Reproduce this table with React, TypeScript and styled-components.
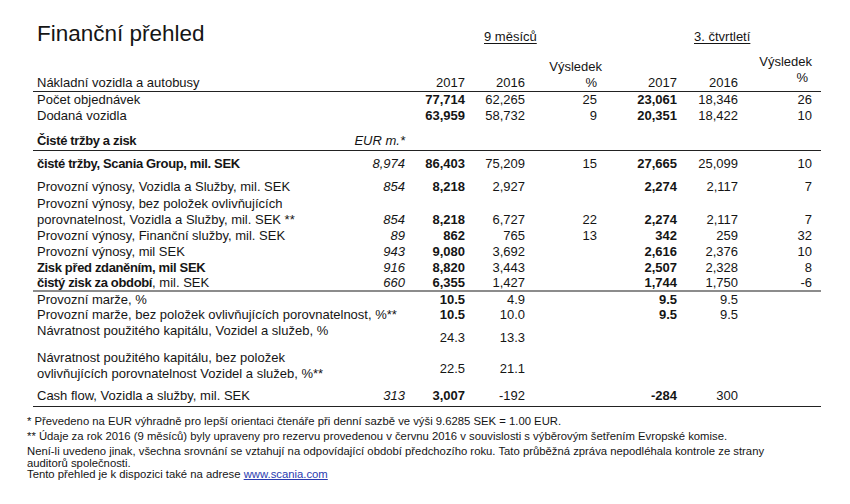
import React from 'react';
import styled, { createGlobalStyle } from 'styled-components';

const GlobalStyle = createGlobalStyle`
  html, body {
    margin: 0;
    padding: 0;
    background: #fff;
  }
  body {
    font-family: "Liberation Sans", Arial, sans-serif;
    color: #151515;
  }
`;

// label | EUR | 9m 2017 | 9m 2016 | 9m % | Q3 2017 | Q3 2016 | Q3 % | end
const COLS = '316px 56px 60px 60px 72px 80px 61px 74px 9px';

type Rule = 'dark' | 'gray';

interface DataRow {
    label: React.ReactNode;
    bold?: boolean;
    eur?: string;
    v: string[];
    h: number;
    pt?: number;
    vpt?: number;
    strong?: boolean;
    rule?: Rule;
}

const topRows: DataRow[] = [
    { label: 'Počet objednávek', v: ['77,714', '62,265', '25', '23,061', '18,346', '26'], h: 16, strong: true },
    { label: 'Dodaná vozidla', v: ['63,959', '58,732', '9', '20,351', '18,422', '10'], h: 16, strong: true },
];

const mainRows: DataRow[] = [
    { label: 'čisté tržby, Scania Group, mil. SEK', bold: true, eur: '8,974', v: ['86,403', '75,209', '15', '27,665', '25,099', '10'], h: 28, pt: 5, strong: true },
    { label: 'Provozní výnosy, Vozidla a Služby, mil. SEK', eur: '854', v: ['8,218', '2,927', '', '2,274', '2,117', '7'], h: 17, strong: true },
    {
        label: <>Provozní výnosy, bez položek ovlivňujících<br />porovnatelnost, Vozidla a Služby, mil. SEK **</>,
        eur: '854', v: ['8,218', '6,727', '22', '2,274', '2,117', '7'], h: 32, vpt: 16, strong: true,
    },
    { label: 'Provozní výnosy, Finanční služby, mil. SEK', eur: '89', v: ['862', '765', '13', '342', '259', '32'], h: 16, strong: true },
    { label: 'Provozní výnosy, mil SEK', eur: '943', v: ['9,080', '3,692', '', '2,616', '2,376', '10'], h: 16, strong: true },
    { label: 'Zisk před zdaněním, mil SEK', bold: true, eur: '916', v: ['8,820', '3,443', '', '2,507', '2,328', '8'], h: 15, strong: true },
    {
        label: <><b>čistý zisk za období</b>, mil. SEK</>,
        eur: '660', v: ['6,355', '1,427', '', '1,744', '1,750', '-6'], h: 17, strong: true, rule: 'gray',
    },
    { label: 'Provozní marže, %', v: ['10.5', '4.9', '', '9.5', '9.5', ''], h: 15, strong: true },
    { label: 'Provozní marže, bez položek ovlivňujících porovnatelnost, %**', v: ['10.5', '10.0', '', '9.5', '9.5', ''], h: 16, strong: true },
    { label: 'Návratnost použitého kapitálu, Vozidel a služeb, %', v: ['24.3', '13.3', '', '', '', ''], h: 27, vpt: 7 },
    {
        label: <>Návratnost použitého kapitálu, bez položek<br />ovlivňujících porovnatelnost Vozidel a služeb, %**</>,
        v: ['22.5', '21.1', '', '', '', ''], h: 32, vpt: 11,
    },
    { label: 'Cash flow, Vozidla a služby, mil. SEK', eur: '313', v: ['3,007', '-192', '', '-284', '300', ''], h: 25, pt: 6, strong: true, rule: 'dark' },
];

export default function App() {
    return (
        <Page>
            <GlobalStyle />
            <Table>
                <TitleRow>
                    <Title>Finanční přehled</Title>
                    <Period $col={4} $offset={19}>9 měsíců</Period>
                    <Period $col={7} $offset={17}>3. čtvrtletí</Period>
                </TitleRow>

                <HeaderRow>
                    <Label>Nákladní vozidla a autobusy</Label>
                    <Num />
                    <Num>2017</Num>
                    <Num>2016</Num>
                    <Num><Shift $by={-5}>Výsledek</Shift><br />%</Num>
                    <Num>2017</Num>
                    <Num>2016</Num>
                    <Num $lift={5}>Výsledek<br /><Shift $by={4}>%</Shift></Num>
                </HeaderRow>

                {topRows.map((r, i) => <Line key={i} row={r} />)}

                <SectionRow>
                    <Label $bold>Čisté tržby a zisk</Label>
                    <Num $italic>EUR m.*</Num>
                </SectionRow>

                {mainRows.map((r, i) => <Line key={i} row={r} />)}
            </Table>

            <Notes>
                <p>* Převedeno na EUR výhradně pro lepší orientaci čtenáře při denní sazbě ve výši 9.6285 SEK = 1.00 EUR.</p>
                <p>** Údaje za rok 2016 (9 měsíců) byly upraveny pro rezervu provedenou v červnu 2016 v souvislosti s výběrovým šetřením Evropské komise.</p>
                <p>
                    Není-li uvedeno jinak, všechna srovnání se vztahují na odpovídající období předchozího roku. Tato průběžná zpráva nepodléhala kontrole ze strany<br />
                    auditorů společnosti.<br />
                    Tento přehled je k dispozici také na adrese <a href="#">www.scania.com</a>
                </p>
            </Notes>
        </Page>
    );
}

const Line = ({ row }: { row: DataRow }) => (
    <Row $h={row.h} $pt={row.pt || 0} $rule={row.rule}>
        <Label $bold={row.bold}>{row.label}</Label>
        <Num $italic $pt={row.vpt}>{row.eur}</Num>
        {row.v.map((val, i) => (
            <Num key={i} $bold={row.strong && (i === 0 || i === 3)} $pt={row.vpt}>{val}</Num>
        ))}
    </Row>
);

const Page = styled.div`
    width: 850px;
    height: 504px;
    overflow: hidden;
    background: #fff;
`;

const Table = styled.div`
    margin-left: 33px;
    width: 788px;
    font-size: 13px;
    line-height: 16px;
`;

const Grid = styled.div`
    display: grid;
    grid-template-columns: ${COLS};
    box-sizing: border-box;
`;

const TitleRow = styled(Grid)`
    height: 47px;
    padding-top: 21px;
    align-items: baseline;
`;

const Title = styled.h1`
    margin: 0;
    padding-left: 4px;
    font-size: 22.5px;
    line-height: 26px;
    font-weight: normal;
    white-space: nowrap;
    grid-column: 1 / 2;
`;

const Period = styled.div<{ $col: number; $offset: number }>`
    grid-column: ${p => p.$col} / span 2;
    padding-left: ${p => p.$offset}px;
    text-decoration: underline;
    text-underline-offset: 2px;
    white-space: nowrap;
`;

const HeaderRow = styled(Grid)`
    height: 45px;
    align-items: end;
    border-bottom: 1px solid #222;
`;

const SectionRow = styled(Grid)`
    height: 27px;
    align-items: end;
    padding-bottom: 1px;
    border-bottom: 1px solid #222;
`;

const Row = styled(Grid)<{ $h: number; $pt: number; $rule?: Rule }>`
    height: ${p => p.$h}px;
    padding-top: ${p => p.$pt}px;
    align-items: start;
    border-bottom: ${p => p.$rule === 'dark' ? '1px solid #222' : p.$rule === 'gray' ? '2px solid #8c8c8c' : 'none'};
`;

const Label = styled.div<{ $bold?: boolean }>`
    padding-left: 4px;
    white-space: nowrap;
    font-weight: ${p => p.$bold ? 'bold' : 'normal'};
    letter-spacing: ${p => p.$bold ? '-0.35px' : 'normal'};

    b {
        font-weight: bold;
        letter-spacing: -0.35px;
    }
`;

const Num = styled.div<{ $bold?: boolean; $italic?: boolean; $pt?: number; $lift?: number }>`
    text-align: right;
    white-space: nowrap;
    font-weight: ${p => p.$bold ? 'bold' : 'normal'};
    font-style: ${p => p.$italic ? 'italic' : 'normal'};
    padding-top: ${p => p.$pt || 0}px;
    margin-bottom: ${p => p.$lift || 0}px;
`;

const Shift = styled.span<{ $by: number }>`
    margin-right: ${p => p.$by}px;
`;

const Notes = styled.div`
    margin-left: 27px;
    padding-top: 9px;
    font-family: "Liberation Sans", Arial, sans-serif;
    font-size: 11.3px;
    line-height: 11.5px;
    color: #151515;

    p {
        margin: 0 0 3.5px;
    }

    a {
        color: #2a3bb0;
        text-decoration: underline;
    }
`;
